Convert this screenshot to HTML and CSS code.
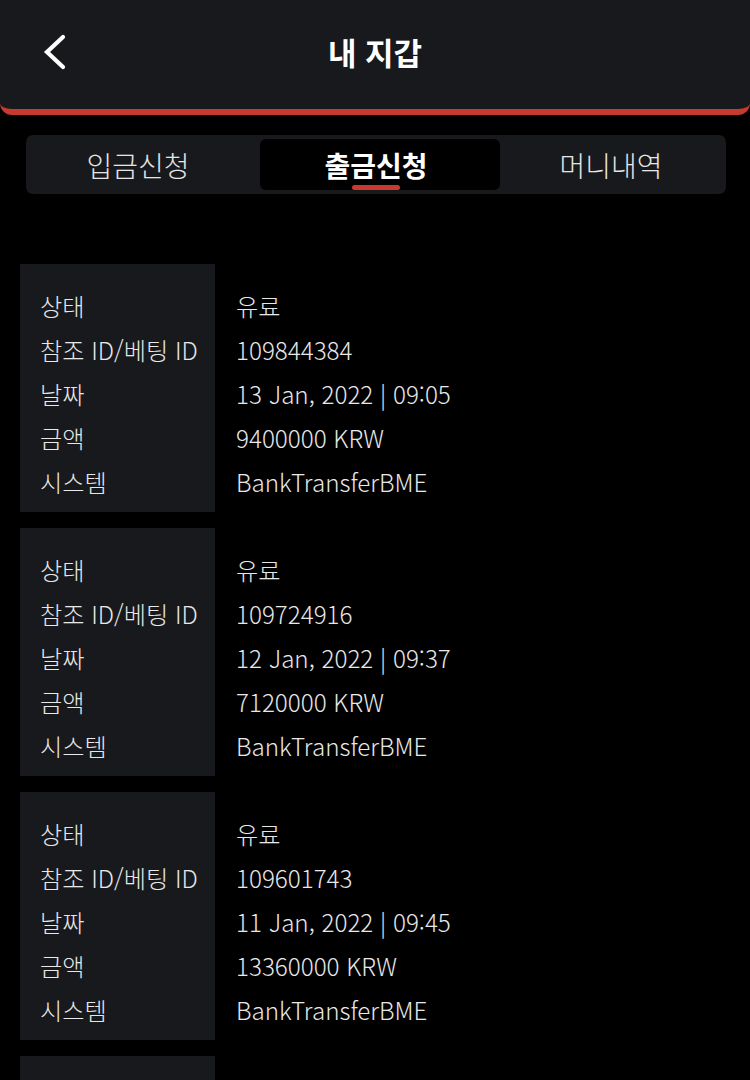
FILE: index.html
```html
<!DOCTYPE html>
<html lang="ko">
<head>
<meta charset="utf-8">
<link rel="stylesheet" href="styles.css">
</head>
<body>
<header class="topbar">
  <button class="back" aria-label="back">
    <svg width="28" height="38" viewBox="0 0 28 38"><path d="M23 4 L7 19 L23 34" fill="none" stroke="#fff" stroke-width="4.2" stroke-linecap="round" stroke-linejoin="miter"/></svg>
  </button>
  <h1 class="title">내 지갑</h1>
</header>
<nav class="tabs">
  <div class="tab first">입금신청</div>
  <div class="tab active">출금신청</div>
  <div class="tab">머니내역</div>
</nav>
<main class="list">
  <section class="card">
    <div class="labels"><div>상태</div><div>참조 ID/베팅 ID</div><div>날짜</div><div>금액</div><div>시스템</div></div>
    <div class="values"><div>유료</div><div>109844384</div><div>13 Jan, 2022 | 09:05</div><div>9400000 KRW</div><div>BankTransferBME</div></div>
  </section>
  <section class="card">
    <div class="labels"><div>상태</div><div>참조 ID/베팅 ID</div><div>날짜</div><div>금액</div><div>시스템</div></div>
    <div class="values"><div>유료</div><div>109724916</div><div>12 Jan, 2022 | 09:37</div><div>7120000 KRW</div><div>BankTransferBME</div></div>
  </section>
  <section class="card">
    <div class="labels"><div>상태</div><div>참조 ID/베팅 ID</div><div>날짜</div><div>금액</div><div>시스템</div></div>
    <div class="values"><div>유료</div><div>109601743</div><div>11 Jan, 2022 | 09:45</div><div>13360000 KRW</div><div>BankTransferBME</div></div>
  </section>
  <section class="card partial">
    <div class="labels"></div>
    <div class="values"></div>
  </section>
</main>
</body>
</html>
```
FILE: styles.css
```css
* { box-sizing: border-box; }
html, body { margin: 0; padding: 0; background: #000; }
body {
  font-family: "Noto Sans CJK KR", "Noto Sans", sans-serif;
  font-weight: 300;
  color: #e8e8e8;
  width: 750px;
  height: 1080px;
  overflow: hidden;
}
.topbar {
  height: 115px;
  background: #18191c;
  border-bottom: 6px solid #c8392f;
  border-radius: 0 0 12px 12px;
  display: flex;
  align-items: center;
  justify-content: center;
  position: relative;
  padding-bottom: 6px;
}
.back {
  position: absolute;
  left: 40px;
  top: 33px;
  background: none;
  border: 0;
  padding: 0;
  line-height: 0;
}
.title {
  margin: 0;
  font-size: 31px;
  font-weight: 700;
  color: #fff;
}
.tabs {
  margin: 20px 24px 0 26px;
  height: 59px;
  background: #18191c;
  border-radius: 7px;
  display: grid;
  grid-template-columns: 230px 240px 1fr;
  padding: 4px;
}
.tab {
  display: flex;
  align-items: center;
  justify-content: center;
  font-size: 28px;
  color: #e6e6e6;
  border-radius: 6px;
  position: relative;
}
.tab.first { padding-right: 14px; }
.tab.active {
  background: #000;
  color: #fff;
  font-weight: 700;
  padding-right: 8px;
}
.tab.active::after {
  content: "";
  position: absolute;
  bottom: 0;
  left: 50%;
  width: 48px;
  margin-left: -28px;
  height: 5px;
  border-radius: 3px;
  background: #c8392f;
}
.list {
  margin-top: 70px;
  display: flex;
  flex-direction: column;
  gap: 16px;
  padding-left: 20px;
}
.card {
  display: flex;
  height: 248px;
  flex-shrink: 0;
}
.labels {
  width: 195px;
  background: #18191c;
  padding: 20px 0 8px 20px;
}
.values {
  padding: 20px 0 8px 21px;
}
.labels div, .values div {
  height: 44px;
  line-height: 44px;
  font-size: 24.2px;
  white-space: nowrap;
}
```
